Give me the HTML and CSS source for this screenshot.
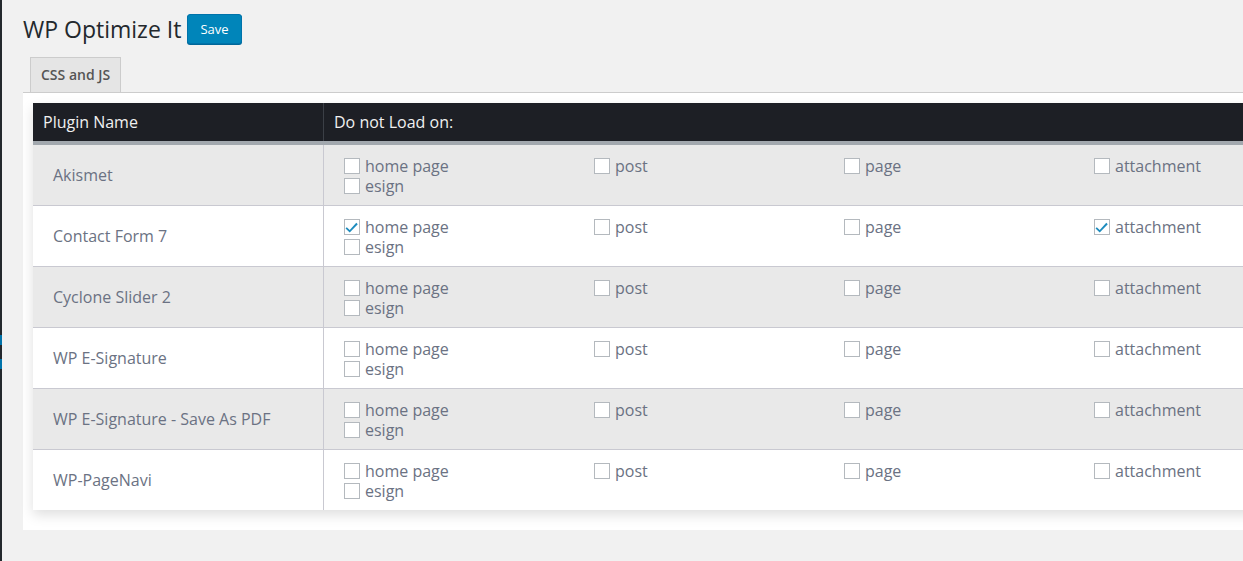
FILE: index.html
```html
<!DOCTYPE html>
<html>
<head>
<meta charset="utf-8">
<title>WP Optimize It</title>
<link rel="stylesheet" href="styles.css">
</head>
<body>
<div class="page">
  <div class="sidebar">
    <div class="sb-dark sb-top"></div>
    <div class="sb-blue"></div>
    <div class="sb-dark sb-mid"></div>
    <div class="sb-blue"></div>
    <div class="sb-dark sb-rest"></div>
  </div>
  <div class="content">
    <div class="title-row">
      <h1 class="title">WP Optimize It</h1>
      <button class="btn-save">Save</button>
    </div>
    <div class="tabs"><span class="tab">CSS and JS</span></div>
    <div class="panel">
      <table class="plugins">
        <thead>
          <tr><th class="col-name">Plugin Name</th><th class="col-opts">Do not Load on:</th></tr>
        </thead>
        <tbody id="rows"></tbody>
      </table>
    </div>
  </div>
</div>
<script src="app.js"></script>
</body>
</html>
```

FILE: app.js
```js
const plugins = [
  ["Akismet", []],
  ["Contact Form 7", [0, 3]],
  ["Cyclone Slider 2", []],
  ["WP E-Signature", []],
  ["WP E-Signature - Save As PDF", []],
  ["WP-PageNavi", []]
];
const opts = ["home page", "post", "page", "attachment", "esign"];
const check = '<svg viewBox="0 0 16 16" width="14" height="14"><path d="M2 8.2 L5.4 11.4 L12.9 3.2 L14.6 4.8 L5.4 14.4 L0.6 9.8 Z" fill="#1e8cbe"/></svg>';
const tb = document.getElementById("rows");
plugins.forEach(([name, checked]) => {
  const tr = document.createElement("tr");
  let html = '<td class="name">' + name + '</td><td class="opts"><div class="opt-list">';
  opts.forEach((o, i) => {
    html += '<label class="opt"><span class="cb">' + (checked.includes(i) ? check : '') + '</span>' + o + '</label>';
  });
  html += '</div></td>';
  tr.innerHTML = html;
  tb.appendChild(tr);
});
```

FILE: styles.css
```css
html, body {
  margin: 0;
  padding: 0;
  background: #f1f1f1;
  overflow: hidden;
  height: 561px;
}
body {
  font-family: "Open Sans", "Liberation Sans", sans-serif;
  color: #444;
}
.page {
  display: flex;
  min-height: 561px;
  width: 1243px;
  overflow: hidden;
}
.sidebar {
  width: 2px;
  flex: none;
  display: flex;
  flex-direction: column;
}
.sb-dark { background: #23282d; }
.sb-top { height: 335px; }
.sb-blue { height: 10px; background: #0073aa; }
.sb-mid { height: 14px; }
.sb-rest { flex: 1; }
.content {
  flex: 1;
  padding: 14px 0 0 21px;
  min-width: 0;
  overflow: hidden;
}
.title-row {
  display: flex;
  align-items: center;
  height: 30px;
}
.title {
  margin: 0;
  font-size: 23px;
  font-weight: 400;
  line-height: 29px;
  color: #23282d;
}
.btn-save {
  margin-left: 6px;
  height: 30px;
  padding: 0 12px;
  background: #0085ba;
  border: 1px solid #0073aa;
  border-radius: 3px;
  box-shadow: 0 1px 0 #006799;
  color: #fff;
  font-family: "Open Sans", "Liberation Sans", sans-serif;
  font-size: 13px;
  line-height: 28px;
}
.tabs {
  margin-top: 13px;
  padding-left: 7px;
  display: flex;
}
.tab {
  display: block;
  background: #e5e5e5;
  border: 1px solid #ccc;
  border-bottom: none;
  padding: 5px 10px;
  font-size: 14px;
  font-weight: 600;
  line-height: 24px;
  color: #555;
}
.panel {
  background: #fff;
  border-top: 1px solid #ccc;
  width: 1420px;
  padding: 10px 10px 20px 10px;
}
.plugins {
  width: 1400px;
  border-collapse: collapse;
  box-shadow: 0 5px 12px rgba(0, 0, 0, 0.13);
}
.plugins thead th {
  background: #1d1f25;
  color: #f0f0f0;
  font-weight: 400;
  font-size: 16px;
  text-align: left;
  height: 38px;
  padding: 0 10px;
  border-bottom: 4px solid #a2a8ae;
}
.plugins th.col-name {
  width: 270px;
  border-right: 1px solid #3b3f46;
}
.plugins tbody tr {
  background: #fff;
}
.plugins tbody tr:nth-child(odd) {
  background: #e9e9e9;
}
.plugins tbody tr + tr td {
  border-top: 1px solid #c9c9d1;
}
.plugins td {
  font-size: 16px;
  color: #6b7283;
  height: 40px;
}
.plugins td.name {
  padding: 0 20px;
  vertical-align: middle;
  border-right: 1px solid #c9c9d1;
}
.plugins td.opts {
  padding: 11px 20px 9px 20px;
  vertical-align: top;
}
.opt-list {
  display: flex;
  flex-wrap: wrap;
}
.opt {
  width: 250px;
  height: 20px;
  display: flex;
  align-items: center;
  line-height: 20px;
}
.cb {
  width: 14px;
  height: 14px;
  border: 1px solid #b4b9be;
  background: #fff;
  margin-right: 5px;
  display: flex;
  align-items: center;
  justify-content: center;
  flex: none;
}
.cb svg {
  display: block;
}
```
